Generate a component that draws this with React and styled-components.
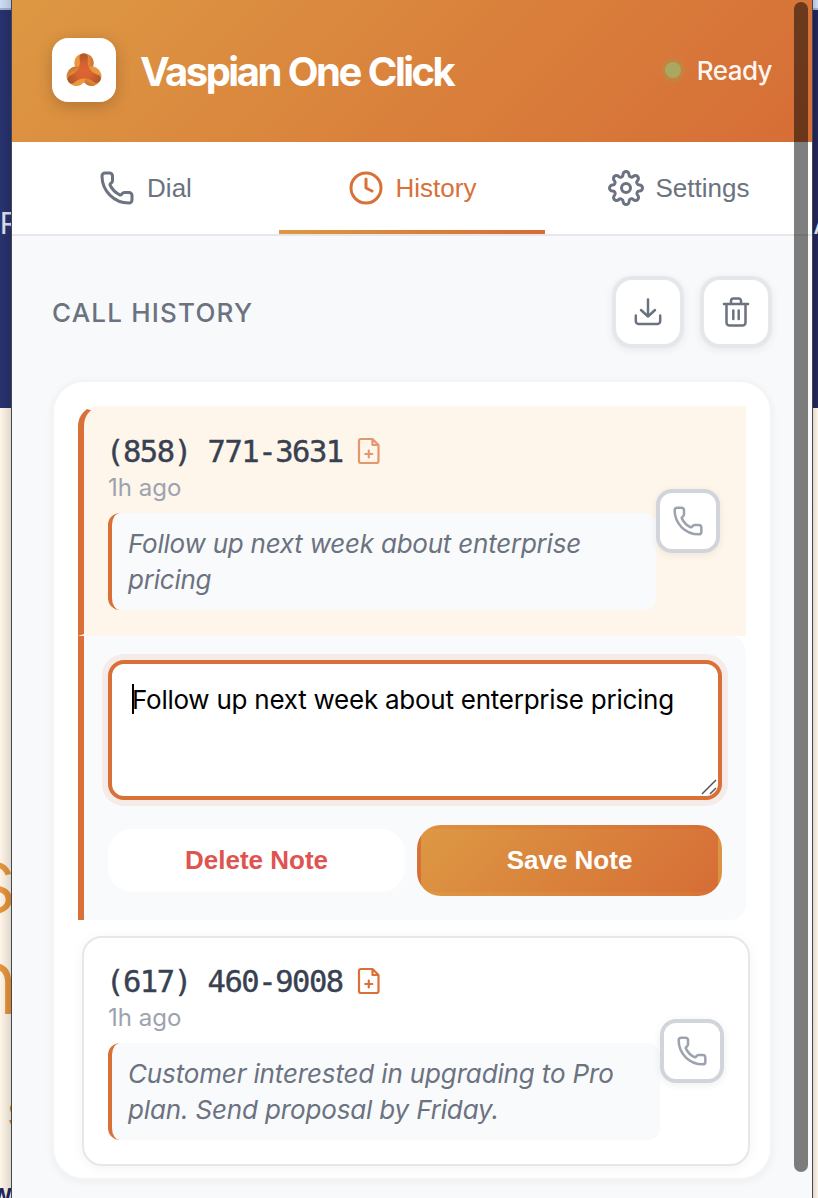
import React from 'react';
import styled, { createGlobalStyle, css } from 'styled-components';
import { Phone, Clock } from 'lucide-react';
import { FiSettings } from 'react-icons/fi';

const ORANGE = '#d87038';
const GRADIENT = 'linear-gradient(135deg, #dd9843 0%, #d66d36 100%)';
const UI = 'Inter, "Liberation Sans", sans-serif';
const CONTROL = '"Liberation Sans", Arial, sans-serif';

const GlobalStyle = createGlobalStyle`
  *, *::before, *::after { box-sizing: border-box; }
  body { margin: 0; overflow: hidden; font-family: ${UI}; -webkit-font-smoothing: antialiased; }
`;

const Screen = styled.div`
  position: relative;
  display: grid;
  grid-template-columns: 11px 802px 5px;
  width: 818px;
  height: 1198px;
  overflow: hidden;
`;

const PageStrip = styled.div`
  position: relative;
  overflow: hidden;
  background: linear-gradient(
    #cddcf6 0 8px, #a3b2ca 8px 10px, ${(p) => (p.$right ? '#23265a' : '#28326f')} 10px 408px, #fef5e7 408px
  );
  &::after {
    content: '';
    position: absolute;
    inset: 0;
    background: linear-gradient(${(p) => (p.$right ? '270deg' : '90deg')}, rgba(0, 0, 0, 0), rgba(0, 0, 0, 0.12));
  }
`;

const PageText = styled.span`
  position: absolute;
  white-space: nowrap;
  right: ${(p) => p.$right};
  top: ${(p) => p.$top};
  font: ${(p) => p.$weight || 400} ${(p) => p.$size}/1 ${UI};
  color: ${(p) => p.$color};
`;

const Popup = styled.main`
  display: flex;
  flex-direction: column;
  height: 1198px;
  overflow: hidden;
  border: solid #45464f;
  border-width: 0 1px;
  background: #f8f9fb;
`;

const Header = styled.header`
  flex: none;
  display: flex;
  align-items: center;
  height: 142px;
  padding: 0 40px 2px;
  background: ${GRADIENT};
  color: #fff;
`;

const LogoTile = styled.div`
  display: grid;
  place-items: center;
  width: 64px;
  height: 64px;
  margin-right: 24px;
  border-radius: 16px;
  background: #fff;
  box-shadow: 0 4px 16px rgba(0, 0, 0, 0.2);
`;

const Title = styled.h1`
  flex: 1;
  margin: 2px 0 0;
  font-size: 40px;
  font-weight: 700;
  letter-spacing: -2.5px;
  word-spacing: 1px;
`;

const Status = styled.div`
  display: flex;
  align-items: center;
  gap: 16px;
  margin-top: 1px;
  font-size: 26px;
  font-weight: 500;
  letter-spacing: -0.55px;
  color: rgba(255, 255, 255, 0.94);
`;

const StatusDot = styled.i`
  width: 16px;
  height: 16px;
  margin-top: -1px;
  border-radius: 50%;
  background: #aaa85f;
  box-shadow: 0 0 0 4px rgba(150, 165, 80, 0.28);
`;

const Tabs = styled.nav`
  flex: none;
  display: grid;
  grid-template-columns: 267px 266px 267px;
  height: 94px;
  border-bottom: 2px solid #e5e7eb;
  background: #fff;
`;

const Tab = styled.button`
  display: flex;
  align-items: center;
  justify-content: center;
  gap: 12px;
  padding: 4px 0 0;
  border: 0;
  border-bottom: 4px solid transparent;
  background: none;
  font: 400 26px ${CONTROL};
  color: #6b7280;
  ${(p) => p.$active && css`
    color: ${ORANGE};
    border-image: linear-gradient(90deg, #dd9843, #d66d36) 1;
    border-width: 0 0 4px;
  `}
`;

const Content = styled.section`
  padding: 40px;
`;

const SectionHead = styled.div`
  display: flex;
  align-items: center;
  gap: 16px;
  margin-bottom: 32px;
`;

const SectionTitle = styled.h2`
  flex: 1;
  margin: 0;
  font-size: 26px;
  font-weight: 500;
  letter-spacing: 1.2px;
  color: #6b7280;
`;

const IconButton = styled.button`
  flex: none;
  display: grid;
  place-items: center;
  width: ${(p) => p.$size}px;
  height: ${(p) => p.$size}px;
  padding: 0;
  border: 4px solid ${(p) => p.$border};
  border-radius: ${(p) => p.$radius}px;
  background: #fff;
  color: ${(p) => p.$color};
  box-shadow: 0 2px 8px rgba(0, 0, 0, 0.07);
`;

const Card = styled.div`
  height: 800px;
  padding: 24px;
  border: 2px solid #f3f4f6;
  border-radius: 32px;
  background: #fff;
  box-shadow: 0 2px 8px rgba(0, 0, 0, 0.05);
`;

const Call = styled.article`
  display: flex;
  align-items: center;
  width: 668px;
  height: 230px;
  padding: 24px;
  ${(p) => p.$open ? css`
    border: 2px solid #fef5eb;
    border-left: 6px solid ${ORANGE};
    border-radius: 20px 0 0 0;
    background: #fef5eb;
  ` : css`
    margin: 16px 0 0 4px;
    border: 2px solid #e5e7eb;
    border-radius: 20px;
    background: #fff;
    box-shadow: 0 2px 12px rgba(0, 0, 0, 0.05);
  `}
`;

const CallInfo = styled.div`
  flex: 1;
`;

const NumberRow = styled.div`
  display: flex;
  align-items: center;
  height: 38px;
`;

const Number = styled.span`
  width: 251px;
  margin-left: -2px;
  font: 400 30.5px "DejaVu Sans Mono", monospace;
  letter-spacing: -1.45px;
  -webkit-text-stroke: 0.4px currentColor;
  white-space: nowrap;
  color: #374151;
`;

const Time = styled.div`
  height: 32px;
  margin: 2px 0 9px;
  font-size: 24px;
  line-height: 32px;
  color: #9ca3af;
`;

const Note = styled.p`
  margin: 0;
  padding: 13px 16px 12px;
  border-left: 4px solid ${ORANGE};
  border-radius: 12px;
  background: #f9fafc;
  font-size: 26px;
  font-style: italic;
  line-height: 36px;
  letter-spacing: ${(p) => p.$tracking};
  color: #6b7280;
`;

const Editor = styled.div`
  width: 668px;
  height: 284px;
  padding: 24px;
  border-left: 6px solid ${ORANGE};
  border-radius: 0 16px 16px 0;
  background: #f9fafc;
`;

const Field = styled.div`
  position: relative;
  width: 614px;
  height: 140px;
  padding: 18px 20px;
  border: 4px solid ${ORANGE};
  border-radius: 16px;
  background: #fff;
  box-shadow: 0 0 0 6px rgba(216, 112, 56, 0.1);
  font-size: 26px;
  line-height: 36px;
  letter-spacing: -0.25px;
  white-space: nowrap;
  color: #000;
`;

const Caret = styled.i`
  position: absolute;
  left: 20px;
  top: 20px;
  width: 2px;
  height: 30px;
  background: #000;
`;

const Grip = styled.svg`
  position: absolute;
  right: 0;
  bottom: 0;
`;

const Actions = styled.div`
  display: flex;
  align-items: center;
  gap: 12px;
  margin-top: 25px;
`;

const Action = styled.button`
  border: 0;
  border-radius: 24px;
  padding: 0;
  font: 700 26px ${CONTROL};
  ${(p) => p.$primary ? css`
    width: 305px;
    height: 71px;
    border: 4px solid transparent;
    background: ${GRADIENT};
    color: #fff;
  ` : css`
    width: 297px;
    height: 63px;
    background: #fff;
    color: #df5350;
  `}
`;

const Scrollbar = styled.div`
  position: absolute;
  left: 794px;
  top: 2px;
  width: 14px;
  height: 1170px;
  border-radius: 7px;
  background: rgba(0, 0, 0, 0.5);
`;

const Logo = () => (
  <svg width="36" height="36" viewBox="0 0 36 36">
    <defs>
      <linearGradient id="arm" x1="0" y1="0" x2="0" y2="1">
        <stop offset="0" stopColor="#a9572a" />
        <stop offset="0.6" stopColor="#d8622f" />
        <stop offset="1" stopColor="#df6334" />
      </linearGradient>
      <linearGradient id="lobe" x1="0" y1="0" x2="1" y2="0">
        <stop offset="0" stopColor="#eb9a40" />
        <stop offset="0.65" stopColor="#e5903c" />
        <stop offset="1" stopColor="#c8702f" />
      </linearGradient>
    </defs>
    {[0, 120, 240].map((a) => (
      <circle key={a} cx="18" cy="11" r="9.800" fill="url(#lobe)" transform={`rotate(${a} 18 19.800)`} />
    ))}
    {[0, 120, 240].map((a) => (
      <path
        key={a}
        d="M17.500 1.400c-2.300 0-4.200 1.500-4 3.800.3 3.800 1.300 7-1.300 11.400l5.800 3.400 5.800-3.400c-2.600-4.400-2.200-7.600-1.800-11.400.2-2.300-2.200-3.800-4.500-3.800z"
        fill="url(#arm)"
        transform={`rotate(${a} 18 19.800)`}
      />
    ))}
  </svg>
);

const DownloadIcon = () => (
  <svg width="32" height="32" viewBox="0 0 32 32" fill="none" stroke="currentColor" strokeWidth="2.5" strokeLinecap="round" strokeLinejoin="round">
    <path d="M16 3.500v17M9 14l7 6.500 7-6.500M3.800 19.500v5.500a3 3 0 0 0 3 3h18.400a3 3 0 0 0 3-3v-5.500" />
  </svg>
);

const TrashIcon = () => (
  <svg width="32" height="32" viewBox="0 0 32 32" fill="none" stroke="currentColor" strokeWidth="2.500" strokeLinecap="round" strokeLinejoin="round">
    <path d="M4 8h24M6.500 8v18.500a3 3 0 0 0 3 3h13a3 3 0 0 0 3-3V8M11 8V5a2.500 2.500 0 0 1 2.500-2.500h5A2.500 2.500 0 0 1 21 5v3M13.300 14.500v8.500M18.700 14.500v8.500" />
  </svg>
);

const NoteIcon = ({ opacity = 1 }) => (
  <svg width="24" height="28" viewBox="0 0 24 28" fill="none" stroke={ORANGE} strokeWidth="2.200" strokeLinecap="round" strokeLinejoin="round" opacity={opacity}>
    <path d="M15.500 2H4A2 2 0 0 0 2 4v20a2 2 0 0 0 2 2h15.500a2 2 0 0 0 2-2V8zM15.500 2v6H21.500M11.800 13.500v7M8.300 17h7" />
  </svg>
);

const CallItem = ({ number, note, open }) => (
  <Call $open={open}>
    <CallInfo>
      <NumberRow><Number>{number}</Number><NoteIcon opacity={open ? 0.7 : 1} /></NumberRow>
      <Time>1h ago</Time>
      <Note $tracking={open ? '-0.23px' : '-0.15px'}>{note}</Note>
    </CallInfo>
    <IconButton $size={64} $radius={16} $border="#d1d5db" $color="#9ca3af" aria-label="Call">
      <Phone size={32} strokeWidth={1.9} />
    </IconButton>
  </Call>
);

export default function App() {
  return (
    <Screen>
      <GlobalStyle />
      <PageStrip>
        <PageText $right="-8px" $top="208px" $size="30px" $color="#dfe3f5">R</PageText>
        <PageText $right="-6px" $top="834px" $size="92px" $weight={300} $color="#e8953c">s</PageText>
        <PageText $right="-8px" $top="935px" $size="92px" $weight={300} $color="#e8953c">n</PageText>
        <PageText $right="-21px" $top="1086px" $size="48px" $color="#d08030">s</PageText>
        <PageText $right="-1px" $top="1186px" $size="20px" $weight={700} $color="#23265a">W</PageText>
      </PageStrip>
      <Popup>
        <Header>
          <LogoTile><Logo /></LogoTile>
          <Title>Vaspian One Click</Title>
          <Status><StatusDot />Ready</Status>
        </Header>
        <Tabs>
          <Tab><Phone size={36} strokeWidth={2} />Dial</Tab>
          <Tab $active><Clock size={36} strokeWidth={2} />History</Tab>
          <Tab><FiSettings size={36} />Settings</Tab>
        </Tabs>
        <Content>
          <SectionHead>
            <SectionTitle>CALL HISTORY</SectionTitle>
            <IconButton $size={72} $radius={20} $border="#e5e7eb" $color="#6b7280" aria-label="Download"><DownloadIcon /></IconButton>
            <IconButton $size={72} $radius={20} $border="#e5e7eb" $color="#6b7280" aria-label="Clear"><TrashIcon /></IconButton>
          </SectionHead>
          <Card>
            <CallItem open number="(858) 771-3631" note="Follow up next week about enterprise pricing" />
            <Editor>
              <Field>
                Follow up next week about enterprise pricing
                <Caret />
                <Grip width="18" height="18" viewBox="0 0 18 18" stroke="#555" strokeWidth="1.500">
                  <path d="M2 16 16 2M10 16l6-6" />
                </Grip>
              </Field>
              <Actions>
                <Action>Delete Note</Action>
                <Action $primary>Save Note</Action>
              </Actions>
            </Editor>
            <CallItem number="(617) 460-9008" note="Customer interested in upgrading to Pro plan. Send proposal by Friday." />
          </Card>
        </Content>
      </Popup>
      <PageStrip $right>
        <PageText $right="-16px" $top="208px" $size="30px" $color="#dfe3f5">A</PageText>
      </PageStrip>
      <Scrollbar />
    </Screen>
  );
}
